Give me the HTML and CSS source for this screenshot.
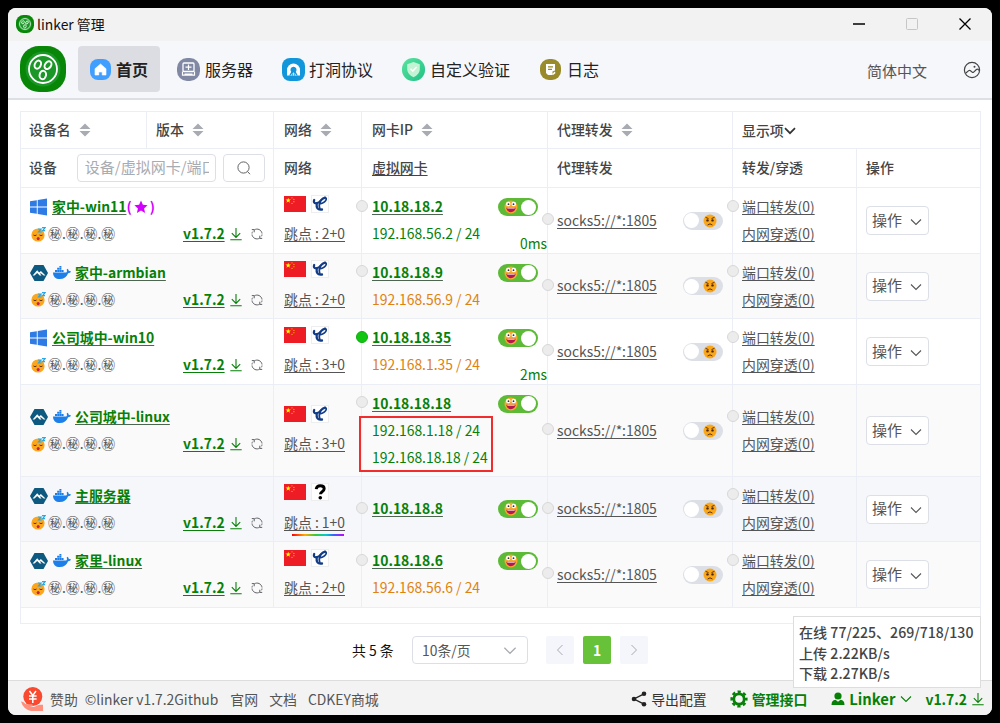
FILE: index.html
```html
<!DOCTYPE html>
<html lang="zh-CN">
<head>
<meta charset="utf-8">
<title>linker 管理</title>
<link rel="stylesheet" href="styles.css">
</head>
<body>
<svg class="defs" width="0" height="0">
  <defs>
    <linearGradient id="mint" x1="0" y1="0" x2="1" y2="1"><stop offset="0" stop-color="#5be3a0"/><stop offset="1" stop-color="#1fc184"/></linearGradient>
    <symbol id="logo" viewBox="0 0 46 46"><rect width="46" height="46" rx="19" fill="#078607"/><circle cx="23" cy="23" r="17.500" fill="#1b9727"/><g fill="none" stroke="#fff"><circle cx="23" cy="23" r="14" stroke-width="1.800"/><g stroke-width="2"><ellipse cx="17.800" cy="18.600" rx="3" ry="4.200" transform="rotate(25 17.800 18.600)"/><ellipse cx="28" cy="19.200" rx="3" ry="4.200" transform="rotate(35 28 19.200)"/><ellipse cx="22.800" cy="29" rx="3.200" ry="4.200" transform="rotate(12 22.800 29)"/></g></g></symbol>
    <symbol id="windows" viewBox="0 0 17 18"><path fill="#2f7be5" d="M0 3.200 6.800 2.200V8.500H0zM7.700 2 17 .4v8.100H7.700zM0 9.400h6.800v6.400L0 14.800zM7.700 9.400H17v8.200L7.700 16z"/></symbol>
    <symbol id="alpine" viewBox="0 0 18 16"><path fill="#0d597f" d="M4.500 0h9L18 8l-4.500 8h-9L0 8z"/><path fill="#fff" d="M2.600 10.500 7.200 5.300l2 2.100 1.700-1.500 4.600 4.600h-1.800l-2.900-2.300-.8.600 1.500 1.700h-1.800L7.200 8 4.500 10.500z"/></symbol>
    <symbol id="docker" viewBox="0 0 18 14"><path fill="#1d80ea" d="M0 6.500h13.200c1-.3 1-1.700.4-2.700l.9-1c1 .7 1.300 1.500 1.300 2.400.9-.2 1.700 0 2.200.4-.5 1.200-1.500 1.600-2.900 1.600C13.700 11 11 13 6.700 13 2.800 13 .2 11.200 0 6.500zM2 4h2v2H2zM4.200 4h2v2h-2zM6.400 4h2v2h-2zM8.600 4h2v2h-2zM4.200 1.800h2v2h-2zM6.400 1.800h2v2h-2zM6.400 0h2v1.600h-2z"/></symbol>
    <symbol id="sleep" viewBox="0 0 15 15"><circle cx="7" cy="8" r="6.600" fill="#fba61c"/><path d="M2.500 8q1.500 1.400 3 0M8.500 8q1.500 1.400 3 0" fill="none" stroke="#5c3512" stroke-width="1"/><ellipse cx="7.200" cy="11.600" rx="1.500" ry="1.700" fill="#c41f4f"/><path d="M7 2h3L7.500 5h3M11 .7h3l-2.300 3H14" fill="none" stroke="#2aa7e8" stroke-width="1.200"/></symbol>
    <symbol id="grin" viewBox="0 0 14 14"><circle cx="7" cy="7" r="6.500" fill="#f7a92b"/><circle cx="4.200" cy="4" r="2.300" fill="#fff"/><circle cx="9.800" cy="4" r="2.300" fill="#fff"/><circle cx="4.500" cy="4.200" r=".9" fill="#333"/><circle cx="9.500" cy="4.200" r=".9" fill="#333"/><path d="M2.300 7.800h9.400c-.5 2.800-2.100 4.400-4.700 4.400s-4.200-1.600-4.700-4.400z" fill="#b5174f"/><path d="M3.300 7.800h7.400v.8H3.300z" fill="#fff"/></symbol>
    <symbol id="sad" viewBox="0 0 14 14"><circle cx="7" cy="7" r="6.500" fill="#fba71a"/><path d="m2.500 3.300 3 1.300M11.500 3.300l-3 1.300M4.600 11q2.400-2.300 4.800 0" fill="none" stroke="#5c3010" stroke-width="1"/><circle cx="4.500" cy="6.400" r="1.200" fill="#4a2810"/><circle cx="9.500" cy="6.400" r="1.200" fill="#4a2810"/></symbol>
    <symbol id="flag" viewBox="0 0 22 16"><path fill="#ee1c25" d="M0 0h22v16H0z"/><path fill="#ff0" d="m4.200 1.700.7 1.900h2L5.300 4.800l.6 2-1.700-1.200-1.700 1.200.6-2-1.600-1.200h2z"/><g fill="#ffb800"><circle cx="8" cy="1.800" r=".6"/><circle cx="9.900" cy="3.400" r=".6"/><circle cx="9.900" cy="5.700" r=".6"/><circle cx="8" cy="7.400" r=".6"/></g></symbol>
    <symbol id="telecom" viewBox="0 0 18 18"><g fill="none" stroke="#123c86" stroke-linecap="round"><path stroke-width="2.200" d="M3.200 5C2 8.300 4.500 8.900 7.500 7.600 9.500 6.600 10 3.500 14 2.700"/><path stroke-width="2.300" d="M5.700 8.500C5.200 12.500 6.500 15.400 11 14.500"/><path stroke-width="1.700" d="M14 2.700c2 .3 1.400 2.700-.5 4.200-1.200 1-2.500 1.600-3.700 1.700M9.800 5.500C8 8.500 8 11.500 9 14"/></g></symbol>
    <symbol id="question" viewBox="0 0 18 18"><path d="M5.200 6.100C5.500 3.700 7 2.700 9.300 2.700c2.500 0 3.900 1.200 3.900 3 0 2.800-3.700 2.900-3.800 5.600" fill="none" stroke="#000" stroke-width="2.900"/><circle cx="9.300" cy="14.700" r="1.800"/></symbol>
    <symbol id="download" viewBox="0 0 12 14"><path d="M6 1v9M1.800 6.200 6 10.400l4.200-4.200M.3 12.800h11.400" fill="none" stroke="currentColor" stroke-width="1.100"/></symbol>
    <symbol id="refresh" viewBox="0 0 12 12"><path d="M3.300 1.900A5 5 0 0 1 11 5.500M8.700 10.100A5 5 0 0 1 1 6.500M3.200 4.300V1.600H.8M8.800 7.700v2.700h2.400M1 5.500q.1-1 .6-1.800M11 6.500q-.1 1-.6 1.800" fill="none" stroke="#606266" stroke-width="1"/></symbol>
    <symbol id="down" viewBox="0 0 12 8"><path d="m1 1.500 5 5 5-5" fill="none" stroke="currentColor" stroke-width="1.100"/></symbol>
    <symbol id="down-bold" viewBox="0 0 12 8"><path d="m1 1.200 5 5 5-5" fill="none" stroke="currentColor" stroke-width="1.700"/></symbol>
    <symbol id="sort" viewBox="0 0 12 14"><path fill="#a8abb2" d="m6 .5 5.500 5.500H.5zM6 13.500.5 8h11z"/></symbol>
  </defs>
</svg>
<div class="window">
  <div class="titlebar">
    <svg class="app-icon"><use href="#logo"/></svg>
    <span class="title">linker 管理</span>
    <div class="controls">
      <svg width="12" height="12"><path d="M0 6h12" stroke="#000" stroke-width="1.300"/></svg>
      <svg width="12" height="12"><rect x=".5" y=".5" width="11" height="11" rx="1" fill="none" stroke="#c6c6c6"/></svg>
      <svg width="12" height="12"><path d="m.5.5 11 11m0-11-11 11" stroke="#000" stroke-width="1.300"/></svg>
    </div>
  </div>
  <header class="header">
    <svg class="logo"><use href="#logo"/></svg>
    <nav class="nav">
      <a class="tab active"><svg width="21" height="21" viewBox="0 0 21 21"><rect width="21" height="21" rx="8" fill="#409eff"/><path d="m10.500 5 5.500 4.700V16h-3.800v-3H8.800v3H5V9.700z" fill="#fff" stroke="#fff" stroke-width=".6" stroke-linejoin="round"/></svg><span>首页</span></a>
      <a class="tab server"><svg width="23" height="23" viewBox="0 0 23 23"><rect width="23" height="23" rx="10" fill="#8088a3"/><rect x="6" y="5" width="11" height="8.500" rx="1" fill="none" stroke="#fff" stroke-width="1.300"/><path d="M11.500 6.500v5.500M8.500 9.200h6M5.500 13.500v3.700h12v-3.700M7.500 16h8" fill="none" stroke="#fff" stroke-width="1.200"/></svg><span>服务器</span></a>
      <a class="tab punch"><svg width="23" height="23" viewBox="0 0 23 23"><rect width="23" height="23" rx="8" fill="#1296db"/><path d="M5 17.500v-5.500a6.500 6.500 0 0 1 13 0v5.500z" fill="#fff"/><path d="M11.500 8.800a3 3 0 0 1 2.300 5l2 3.700H7.200l2-3.700a3 3 0 0 1 2.300-5z" fill="#1296db"/><path d="M11.500 14.500v3M9.300 17.500l1-2M13.700 17.500l-1-2" stroke="#fff" stroke-width=".8"/></svg><span>打洞协议</span></a>
      <a class="tab auth"><svg width="23" height="23" viewBox="0 0 23 23"><rect width="23" height="23" rx="11" fill="url(#mint)"/><path d="m11.500 4 6.300 2.200V11c0 3.800-2.500 6.300-6.300 8.200C7.700 17.300 5.200 14.800 5.200 11V6.200z" fill="#c2f3d3"/><path d="m8.500 10.700 2.300 2.400 3.800-4" fill="none" stroke="#fff" stroke-width="1.500"/></svg><span>自定义验证</span></a>
      <a class="tab logs"><svg width="21" height="21" viewBox="0 0 21 21"><rect width="21" height="21" rx="9" fill="#998b2a"/><path d="M6 5h9v6.500l-2.500 1v3.500H8L6 14z" fill="#fff"/><path d="M8 7.800h5M8 10.300h4" fill="none" stroke="#998b2a" stroke-width="1.200"/><path d="m11.800 15.200 3-2.700.7 1.400-1.900 1.900z" fill="#fff"/></svg><span>日志</span></a>
    </nav>
    <span class="language">简体中文</span>
    <svg class="theme" width="18" height="18" viewBox="0 0 18 18"><g fill="none" stroke="#444" stroke-width="1.200"><circle cx="9" cy="9" r="7.600"/><path d="m2.600 12.300 3.100-2.700q.9-.7 1.800.1l1.600 1.400q.8.700 1.600 0l2.700-2.600q.9-.8 1.800 0l1.200 1"/></g><circle cx="11.500" cy="5.700" r="1" fill="#444"/></svg>
  </header>

  <main class="main">
    <div class="table">
      <div class="head head-top">
        <div class="cell">设备名<svg class="sort"><use href="#sort"/></svg></div>
        <div class="cell">版本<svg class="sort"><use href="#sort"/></svg></div>
        <div class="cell">网络<svg class="sort"><use href="#sort"/></svg></div>
        <div class="cell">网卡IP<svg class="sort"><use href="#sort"/></svg></div>
        <div class="cell">代理转发<svg class="sort"><use href="#sort"/></svg></div>
        <div class="cell items">显示项<svg class="chev"><use href="#down-bold"/></svg></div>
      </div>
      <div class="head grid head-filter">
        <div class="cell"><span>设备</span><div class="input"><div class="placeholder">设备/虚拟网卡/端口</div></div><div class="search"><svg width="14" height="14" viewBox="0 0 14 14"><g fill="none" stroke="#606266" stroke-width="1"><circle cx="6.500" cy="6.500" r="5.600"/><path d="m10.500 10.500 2.500 2.700"/></g></svg></div></div>
        <div class="cell">网络</div>
        <div class="cell"><u>虚拟网卡</u></div>
        <div class="cell">代理转发</div>
        <div class="cell">转发/穿透</div>
        <div class="cell">操作</div>
      </div>

      <div class="row grid r66">
        <div class="cell dev">
          <div class="line"><svg class="win"><use href="#windows"/></svg><b class="name">家中-win11</b><b class="self">(<svg width="14" height="14" viewBox="0 0 14 14"><path fill="#d400ff" d="m7 .5 1.900 4.300 4.700.5-3.500 3.100 1 4.600L7 10.600 2.900 13l1-4.600L.4 5.300l4.700-.5z"/></svg>)</b></div>
          <div class="line"><svg class="sleep"><use href="#sleep"/></svg><span class="secret">㊙.㊙.㊙.㊙</span><b class="ver">v1.7.2</b><svg class="dl"><use href="#download"/></svg><svg class="rf"><use href="#refresh"/></svg></div>
        </div>
        <div class="cell net"><div class="line"><svg class="flag"><use href="#flag"/></svg><svg class="isp"><use href="#telecom"/></svg></div><div class="line"><u>跳点 : 2+0</u></div></div>
        <div class="cell ip"><div class="line"><i class="dot"></i><b>10.18.18.2</b><span class="switch on"><svg><use href="#grin"/></svg><i></i></span></div><div class="line green">192.168.56.2 / 24</div><span class="delay">0ms</span></div>
        <div class="cell proxy"><div class="line"><i class="dot"></i><u>socks5://*:1805</u><span class="switch"><i></i><svg><use href="#sad"/></svg></span></div></div>
        <div class="cell fwd"><div class="line"><i class="dot"></i><u>端口转发(0)</u></div><div class="line"><u>内网穿透(0)</u></div></div>
        <div class="cell op"><div class="button">操作<svg class="chev"><use href="#down"/></svg></div></div>
      </div>

      <div class="row grid r65 stripe">
        <div class="cell dev">
          <div class="line"><svg class="alpine"><use href="#alpine"/></svg><svg class="docker"><use href="#docker"/></svg><b class="name">家中-armbian</b></div>
          <div class="line"><svg class="sleep"><use href="#sleep"/></svg><span class="secret">㊙.㊙.㊙.㊙</span><b class="ver">v1.7.2</b><svg class="dl"><use href="#download"/></svg><svg class="rf"><use href="#refresh"/></svg></div>
        </div>
        <div class="cell net"><div class="line"><svg class="flag"><use href="#flag"/></svg><svg class="isp"><use href="#telecom"/></svg></div><div class="line"><u>跳点 : 2+0</u></div></div>
        <div class="cell ip"><div class="line"><i class="dot"></i><b>10.18.18.9</b><span class="switch on"><svg><use href="#grin"/></svg><i></i></span></div><div class="line orange">192.168.56.9 / 24</div></div>
        <div class="cell proxy"><div class="line"><i class="dot"></i><u>socks5://*:1805</u><span class="switch"><i></i><svg><use href="#sad"/></svg></span></div></div>
        <div class="cell fwd"><div class="line"><i class="dot"></i><u>端口转发(0)</u></div><div class="line"><u>内网穿透(0)</u></div></div>
        <div class="cell op"><div class="button">操作<svg class="chev"><use href="#down"/></svg></div></div>
      </div>

      <div class="row grid r66">
        <div class="cell dev">
          <div class="line"><svg class="win"><use href="#windows"/></svg><b class="name">公司城中-win10</b></div>
          <div class="line"><svg class="sleep"><use href="#sleep"/></svg><span class="secret">㊙.㊙.㊙.㊙</span><b class="ver">v1.7.2</b><svg class="dl"><use href="#download"/></svg><svg class="rf"><use href="#refresh"/></svg></div>
        </div>
        <div class="cell net"><div class="line"><svg class="flag"><use href="#flag"/></svg><svg class="isp"><use href="#telecom"/></svg></div><div class="line"><u>跳点 : 3+0</u></div></div>
        <div class="cell ip"><div class="line"><i class="dot live"></i><b>10.18.18.35</b><span class="switch on"><svg><use href="#grin"/></svg><i></i></span></div><div class="line orange">192.168.1.35 / 24</div><span class="delay">2ms</span></div>
        <div class="cell proxy"><div class="line"><i class="dot"></i><u>socks5://*:1805</u><span class="switch"><i></i><svg><use href="#sad"/></svg></span></div></div>
        <div class="cell fwd"><div class="line"><i class="dot"></i><u>端口转发(0)</u></div><div class="line"><u>内网穿透(0)</u></div></div>
        <div class="cell op"><div class="button">操作<svg class="chev"><use href="#down"/></svg></div></div>
      </div>

      <div class="row grid r92 stripe">
        <div class="cell dev">
          <div class="line"><svg class="alpine"><use href="#alpine"/></svg><svg class="docker"><use href="#docker"/></svg><b class="name">公司城中-linux</b></div>
          <div class="line"><svg class="sleep"><use href="#sleep"/></svg><span class="secret">㊙.㊙.㊙.㊙</span><b class="ver">v1.7.2</b><svg class="dl"><use href="#download"/></svg><svg class="rf"><use href="#refresh"/></svg></div>
        </div>
        <div class="cell net"><div class="line"><svg class="flag"><use href="#flag"/></svg><svg class="isp"><use href="#telecom"/></svg></div><div class="line"><u>跳点 : 3+0</u></div></div>
        <div class="cell ip"><div class="line"><i class="dot"></i><b>10.18.18.18</b><span class="switch on"><svg><use href="#grin"/></svg><i></i></span></div><div class="line green">192.168.1.18 / 24</div><div class="line green">192.168.18.18 / 24</div><span class="marker"></span></div>
        <div class="cell proxy"><div class="line"><i class="dot"></i><u>socks5://*:1805</u><span class="switch"><i></i><svg><use href="#sad"/></svg></span></div></div>
        <div class="cell fwd"><div class="line"><i class="dot"></i><u>端口转发(0)</u></div><div class="line"><u>内网穿透(0)</u></div></div>
        <div class="cell op"><div class="button">操作<svg class="chev"><use href="#down"/></svg></div></div>
      </div>

      <div class="row grid r65 hover">
        <div class="cell dev">
          <div class="line"><svg class="alpine"><use href="#alpine"/></svg><svg class="docker"><use href="#docker"/></svg><b class="name">主服务器</b></div>
          <div class="line"><svg class="sleep"><use href="#sleep"/></svg><span class="secret">㊙.㊙.㊙.㊙</span><b class="ver">v1.7.2</b><svg class="dl"><use href="#download"/></svg><svg class="rf"><use href="#refresh"/></svg></div>
        </div>
        <div class="cell net"><div class="line"><svg class="flag"><use href="#flag"/></svg><svg class="isp"><use href="#question"/></svg></div><div class="line"><u>跳点 : 1+0</u></div><span class="rainbow"></span></div>
        <div class="cell ip"><div class="line"><i class="dot"></i><b>10.18.18.8</b><span class="switch on"><svg><use href="#grin"/></svg><i></i></span></div></div>
        <div class="cell proxy"><div class="line"><i class="dot"></i><u>socks5://*:1805</u><span class="switch"><i></i><svg><use href="#sad"/></svg></span></div></div>
        <div class="cell fwd"><div class="line"><i class="dot"></i><u>端口转发(0)</u></div><div class="line"><u>内网穿透(0)</u></div></div>
        <div class="cell op"><div class="button">操作<svg class="chev"><use href="#down"/></svg></div></div>
      </div>

      <div class="row grid r66 stripe">
        <div class="cell dev">
          <div class="line"><svg class="alpine"><use href="#alpine"/></svg><svg class="docker"><use href="#docker"/></svg><b class="name">家里-linux</b></div>
          <div class="line"><svg class="sleep"><use href="#sleep"/></svg><span class="secret">㊙.㊙.㊙.㊙</span><b class="ver">v1.7.2</b><svg class="dl"><use href="#download"/></svg><svg class="rf"><use href="#refresh"/></svg></div>
        </div>
        <div class="cell net"><div class="line"><svg class="flag"><use href="#flag"/></svg><svg class="isp"><use href="#telecom"/></svg></div><div class="line"><u>跳点 : 2+0</u></div></div>
        <div class="cell ip"><div class="line"><i class="dot"></i><b>10.18.18.6</b><span class="switch on"><svg><use href="#grin"/></svg><i></i></span></div><div class="line orange">192.168.56.6 / 24</div></div>
        <div class="cell proxy"><div class="line"><i class="dot"></i><u>socks5://*:1805</u><span class="switch"><i></i><svg><use href="#sad"/></svg></span></div></div>
        <div class="cell fwd"><div class="line"><i class="dot"></i><u>端口转发(0)</u></div><div class="line"><u>内网穿透(0)</u></div></div>
        <div class="cell op"><div class="button">操作<svg class="chev"><use href="#down"/></svg></div></div>
      </div>
      <div class="table-end"></div>
    </div>

    <div class="pagination">
      <span class="total">共 5 条</span>
      <div class="select">10条/页<svg class="chev"><use href="#down"/></svg></div>
      <div class="page"><svg width="8" height="12"><path d="M6.500 1 1.500 6l5 5" fill="none" stroke="#a8abb2"/></svg></div>
      <div class="page current">1</div>
      <div class="page"><svg width="8" height="12"><path d="m1.500 1 5 5-5 5" fill="none" stroke="#a8abb2"/></svg></div>
    </div>
  </main>

  <footer class="footer">
    <svg class="coin" width="22" height="24" viewBox="0 0 22 24"><circle cx="11.800" cy="9.500" r="9.500" fill="#f9492f"/><path d="m8.500 4 3.300 4.500L15 4M8 9h7.600M8 12h7.600M11.800 8.500V16" fill="none" stroke="#fff" stroke-width="1.500"/><path d="M0 14.500q2.500-.3 4.500 2.500 3 .5 6 .3 2 .2 1.200 1.900l-3 .5 4 .3 5.500-2.300H22V24H10Q2 22 0 14.500z" fill="#ff8f7c"/></svg>
    <span class="sponsor">赞助</span><span class="copy">©linker v1.7.2Github</span><span class="site">官网</span><span class="docs">文档</span><span>CDKEY商城</span>
    <div class="actions">
      <svg class="share" width="16" height="16" viewBox="0 0 16 16"><path d="M13 2.800 3 8l10 5.200" fill="none" stroke="#222" stroke-width="1.400"/><g fill="#222"><circle cx="13" cy="2.800" r="2.300"/><circle cx="3" cy="8" r="2.300"/><circle cx="13" cy="13.200" r="2.300"/></g></svg>
      <span class="export">导出配置</span>
      <svg class="gear" width="18" height="18" viewBox="0 0 18 18"><circle cx="9" cy="9" r="5.200" fill="none" stroke="#078007" stroke-width="2.800"/><circle cx="9" cy="9" r="7.300" fill="none" stroke="#078007" stroke-width="2.600" stroke-dasharray="3.200 2.530" stroke-dashoffset="1.600"/></svg>
      <b class="manage">管理接口</b>
      <svg class="user" width="14" height="14" viewBox="0 0 14 14"><circle cx="7" cy="4" r="3.600" fill="#078007"/><path d="M.5 13q0-5 4-5.300L7 9.800l2.500-2.100q4 .3 4 5.300z" fill="#078007"/></svg>
      <b class="linker">Linker</b><svg class="chev"><use href="#down"/></svg>
      <b class="version">v1.7.2</b><svg class="dl"><use href="#download"/></svg>
    </div>
  </footer>
  <div class="status"><span>在线 77/225、269/718/130</span><span>上传 2.22KB/s</span><span>下载 2.27KB/s</span></div>
</div>
</body>
</html>
```
FILE: styles.css
```css
* { box-sizing: border-box; }
body {
  margin: 0;
  height: 723px;
  padding: 8px;
  overflow: hidden;
  background: #000;
  font: 13.9px/20px "Noto Sans CJK SC", "Noto Sans", sans-serif;
  color: #555;
}
svg { display: block; flex: none; }
i { font-style: normal; }
.defs { position: absolute; }
u, .name, .ver, .ip b { text-decoration: underline; text-underline-offset: 2px; text-decoration-thickness: 1px; text-decoration-skip-ink: none; }

.window {
  position: relative;
  display: flex;
  flex-direction: column;
  width: 984px;
  height: 707px;
  background: #fff;
  border-radius: 8px;
  overflow: hidden;
}
.titlebar { display: flex; align-items: center; height: 33px; padding: 0 21px 1px 8px; background: #f2f2f2; color: #111; }
.app-icon { width: 18px; height: 18px; }
.title { margin: 0 0 1px 3px; }
.controls { display: flex; gap: 41px; margin-left: auto; }

.header { display: flex; align-items: center; height: 59px; padding: 0 12px 1px; background: #f5f7fb; border-bottom: 2px solid #dcdfe3; }
.logo { width: 46px; height: 46px; }
.nav { display: flex; align-items: center; margin-left: 12px; font-size: 16px; color: #222; }
.tab { display: flex; align-items: center; height: 46px; gap: 4px; }
.active { width: 82px; padding-left: 12px; gap: 5px; background: #dbdde2; border-radius: 4px; font-weight: 700; }
.server { margin-left: 17px; gap: 5px; }
.punch { margin-left: 29px; }
.auth { margin-left: 29px; gap: 5px; }
.logs { margin-left: 30px; gap: 6px; }
.language { margin-left: auto; margin-right: 36px; padding-top: 3px; font-size: 15px; color: #555; }
.theme { margin: 2px -1px 0 0; }

.main { flex: 1; padding: 11px 11px 0 12px; }
.table { border: 1px solid #ebeef5; }
.grid { display: grid; grid-template-columns: 253px 88px 186px 185px 124px 123px; }
.head { color: #444; font-weight: 500; }
.head-top { display: grid; grid-template-columns: 126px 127px 88px 186px 185px 247px; height: 37px; }
.head-filter { height: 39px; }
.cell { position: relative; display: flex; padding: 0 0 0 10px; border-right: 1px solid #ebeef5; border-bottom: 1px solid #ebeef5; }
.cell:last-child { border-right: 0; }
.head .cell { align-items: center; padding-bottom: 2px; }
.head .cell:first-child { padding-left: 8px; }
.head .cell:nth-child(5), .row .proxy { padding-left: 9px; }
.head-filter .cell:nth-child(4), .head-filter .cell:last-child { padding-left: 9px; }
.head-top .cell:nth-child(2) { padding-left: 9px; }
.head-top .items { padding: 0 0 0 9px; }
.sort { width: 12px; height: 14px; margin: 2px 0 0 8px; }
.items .chev { width: 12px; height: 8px; margin-top: 1px; color: #333; }
.input { width: 139px; height: 28px; margin: 2px 0 0 20px; padding: 0 6px 0 7px; border: 1px solid #dcdfe6; border-radius: 4px; font-size: 15px; line-height: 24px; font-weight: 400; color: #a8abb2; }
.placeholder { height: 26px; overflow: hidden; white-space: nowrap; }
.search { display: flex; align-items: center; justify-content: center; width: 42px; height: 28px; margin: 2px 0 0 7px; border: 1px solid #dcdfe6; border-radius: 4px; }

.r65 { height: 65px; }
.r66 { height: 66px; }
.r92 { height: 92px; }
.row .cell { flex-direction: column; justify-content: center; }
.stripe { background: #fafafa; }
.hover { background: #f5f7fa; }
.line { position: relative; display: flex; align-items: center; height: 27px; padding-bottom: 2px; white-space: nowrap; }
.line > svg, .self svg { margin-top: 2px; }
.row .dev { padding-left: 9px; }
.win { width: 17px; height: 18px; margin-right: 5px; }
.alpine { width: 18px; height: 16px; margin-right: 5px; }
.docker { width: 18px; height: 14px; margin-right: 4px; }
.name, .ver, .ip b { color: #078007; }
.name, .ip b { text-decoration-color: #4d6650; }
.self { display: flex; align-items: center; gap: 2px; color: #d400ff; }
.sleep { width: 15px; height: 15px; margin-right: 2px; margin-left: 1px; }
.secret { width: 135px; }
.dl { width: 12px; height: 14px; margin-left: 5px; color: #078007; }
.rf { width: 12px; height: 12px; margin-left: 9px; }
.line > .flag { width: 22px; height: 16px; margin: 0 0 5px; }
.line > .isp { width: 18px; height: 18px; margin: 0 0 5px 5px; outline: 1px solid #eee; outline-offset: -1px; background: #fff; }
.dot { position: absolute; left: -15px; top: 6px; width: 12px; height: 12px; border: 1px solid #d8d8d8; border-radius: 50%; background: #ececec; z-index: 1; }
.ip .dot { left: -16px; }
.live { background: #12c512; border-color: #0cae0c; }
.green, .delay { color: #078007; }
.orange { color: #e0820f; }
.switch { display: flex; align-items: center; justify-content: space-between; width: 40px; height: 18px; margin: 2px 9.500px 0 auto; padding: 0 2px 0 1px; border-radius: 9px; background: #dcdfe6; }
.switch svg { width: 14px; height: 14px; margin-right: 4px; }
.switch i { width: 15px; height: 15px; border-radius: 50%; background: #fff; }
.on { background: #5dba37; padding-left: 6px; }
.on svg { margin: 0; }
.delay { position: absolute; right: 0; bottom: 0; }
.marker { position: absolute; left: -3px; top: 31px; width: 134px; height: 56px; border: 2px solid #f12c2c; z-index: 2; }
.rainbow { position: absolute; left: 18px; top: 57px; width: 52px; height: 2px; background: linear-gradient(90deg, #f00, #fa0 25%, #3c3 45%, #0cc 65%, #36f 80%, #c0f); }
.row .fwd, .row .op { padding-left: 9px; }
.button { display: flex; align-items: center; width: 63px; height: 29px; padding: 0 0 2px 5px; border: 1px solid #dcdfe6; border-radius: 4px; background: #fff; font-size: 15px; }
.button .chev { width: 12px; height: 8px; margin-left: 8px; margin-top: 4px; }
.table-end { height: 15px; }

.pagination { display: flex; align-items: center; height: 28px; margin-top: 12px; padding-left: 332px; }
.total { width: 60px; color: #111; }
.select { display: flex; align-items: center; justify-content: space-between; width: 116px; height: 28px; margin-right: 18px; padding: 0 10px 0 9px; border: 1px solid #dcdfe6; border-radius: 4px; }
.select .chev { width: 14px; height: 9px; color: #a8abb2; }
.page { display: flex; align-items: center; justify-content: center; width: 28px; height: 28px; margin-right: 9px; border-radius: 2px; background: #f4f6fb; }
.current { background: #67c23a; color: #fff; font-weight: 700; }

.footer { display: flex; align-items: center; height: 35px; padding: 1px 8px 0 13px; border-top: 1px solid #ddd; background: #f3f3f3; white-space: nowrap; }
.sponsor { margin: 0 7px; }
.site { margin-left: 12px; }
.docs { margin: 0 11px; }
.actions { display: flex; align-items: center; margin-left: auto; color: #333; }
.actions b { color: #078007; }
.export { margin: 0 23px 0 4px; }
.manage { margin: 0 24px 0 4px; }
.linker { margin: 0 5px 0 4px; font-size: 14.8px; }
.actions .chev { width: 12px; height: 8px; color: #078007; }
.version { margin-left: 13px; }
.status { position: absolute; left: 785px; top: 608px; display: flex; flex-direction: column; width: 188px; height: 72px; padding: 5px 0 0 5px; border: 1px solid #ddd; background: #fff; line-height: 20.5px; font-size: 14.1px; font-weight: 500; white-space: nowrap; color: #444; }
```
